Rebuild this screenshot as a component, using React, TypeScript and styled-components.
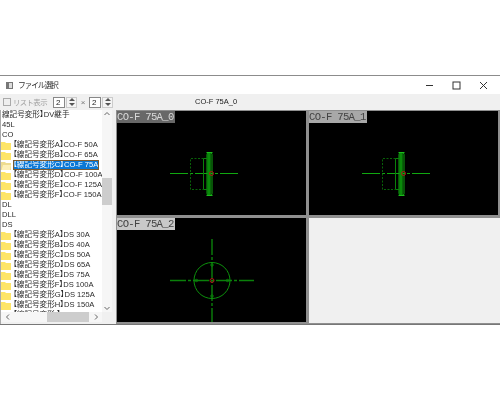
import React from 'react';
import styled, { createGlobalStyle } from 'styled-components';

const GlobalStyle = createGlobalStyle`
  html, body {
    margin: 0;
    padding: 0;
    width: 500px;
    height: 400px;
    overflow: hidden;
    background: #fff;
    font-family: "Liberation Sans", "Noto Sans CJK JP", sans-serif;
  }
`;

const Page = styled.div`
  width: 500px;
  height: 400px;
  padding-top: 75px;
  box-sizing: border-box;
  filter: blur(0.3px);
`;

const Window = styled.div`
  width: 500px;
  height: 250px;
  box-sizing: border-box;
  border-top: 1px solid #8c8c8c;
  border-bottom: 1px solid #777;
  display: flex;
  flex-direction: column;
  background: #f0f0f0;
`;

const TitleBar = styled.div`
  height: 18px;
  flex: none;
  background: #fff;
  display: flex;
  align-items: center;
  padding: 0 3px 0 6px;
`;

const AppIcon = styled.div`
  width: 7px;
  height: 7px;
  box-sizing: border-box;
  border: 1px solid #777;
  border-left-width: 3px;
  background: #ddd;
`;

const TitleText = styled.span`
  margin: 0 0 1px 5px;
  font-size: 7.8px;
  letter-spacing: -1.2px;
  color: #333;
  flex: 1;
`;

const WindowButton = styled.div`
  width: 27px;
  height: 18px;
  display: flex;
  align-items: center;
  justify-content: center;
`;

const Toolbar = styled.div`
  height: 16px;
  flex: none;
  display: flex;
  align-items: center;
  padding-left: 3px;
  box-sizing: border-box;
`;

const CheckBox = styled.div`
  width: 6px;
  height: 6px;
  border: 1px solid #aaa;
  background: #eee;
`;

const CheckLabel = styled.span`
  margin: 0 0 2px 2px;
  width: 40px;
  font-size: 7.4px;
  letter-spacing: -0.6px;
  color: #a0a0a0;
  white-space: nowrap;
`;

const SpinInput = styled.div`
  width: 12px;
  height: 11px;
  box-sizing: border-box;
  border: 1px solid #888;
  background: #fff;
  font-size: 8px;
  line-height: 9px;
  color: #222;
  padding-left: 2px;
`;

const SpinButtons = styled.div`
  width: 11px;
  height: 11px;
  margin-left: 1px;
  display: flex;
  flex-direction: column;
  align-items: center;
  justify-content: space-around;
  border: 1px solid #ccc;
  box-sizing: border-box;
  background: #f4f4f4;
`;

const Times = styled.span`
  width: 12px;
  text-align: center;
  font-size: 8px;
  color: #777;
`;

const PreviewName = styled.span`
  margin: 0 0 1px 82px;
  font-size: 7.5px;
  color: #222;
`;

const Body = styled.div`
  flex: 1;
  min-height: 0;
  display: flex;
`;

const ListBox = styled.div`
  width: 116px;
  flex: none;
  box-sizing: border-box;
  padding: 0 4px 2px 0;
  border-left: 1px solid #aaa;
  display: grid;
  grid-template-columns: 1fr 10px;
  grid-template-rows: 1fr 10px;
  background: #f0f0f0;
`;

const Rows = styled.div`
  overflow: hidden;
  background: #fff;
  white-space: nowrap;
`;

const Row = styled.div`
  height: 10px;
  display: flex;
  align-items: center;
  font-size: 7.6px;
  line-height: 10px;
  font-feature-settings: "palt";
`;

const RowName = styled.span<{ $selected?: boolean; $plain?: boolean }>`
  margin-left: ${(p) => (p.$plain ? '1px' : '2px')};
  padding-right: 1px;
  background: ${(p) => (p.$selected ? '#0a78d7' : 'transparent')};
  color: ${(p) => (p.$selected ? '#fff' : '#2a2a2a')};
  outline: ${(p) => (p.$selected ? '1px solid #7a5a30' : 'none')};
  outline-offset: -1px;
`;

const VTrack = styled.div`
  background: #f6f6f6;
  display: flex;
  flex-direction: column;
  align-items: center;
`;

const VThumb = styled.div`
  width: 10px;
  height: 27px;
  margin-top: 60px;
  margin-bottom: auto;
  background: #cdcdcd;
`;

const HTrack = styled.div`
  background: #f6f6f6;
  display: flex;
  align-items: center;
  padding: 0 2px 0 3px;
  box-sizing: border-box;
`;

const HThumb = styled.div`
  width: 42px;
  height: 10px;
  margin-left: 35px;
  margin-right: auto;
  background: #cdcdcd;
`;

const Corner = styled.div`
  background: #f0f0f0;
`;

const Views = styled.div`
  flex: 1;
  min-width: 0;
  display: grid;
  grid-template-columns: 192px 192px;
  grid-template-rows: 107px 107px;
  align-content: start;
`;

const View = styled.div<{ $empty?: boolean }>`
  box-sizing: border-box;
  border: 1px solid #8f8f8f;
  border-width: ${(p) => (p.$empty ? '1px 0 1px 1px' : '1px 2px 2px 1px')};
  background: ${(p) => (p.$empty ? '#f0f0f0' : '#000')};
  position: relative;
  overflow: hidden;
`;

const ViewLabel = styled.div<{ $active?: boolean; $dim?: boolean }>`
  position: absolute;
  left: 0;
  top: 0;
  height: 12px;
  padding: 0 1px 0 0;
  font: 10.6px/12px "Liberation Mono", monospace;
  letter-spacing: -0.7px;
  white-space: pre;
  background: ${(p) => (p.$active ? '#686868' : p.$dim ? '#a8a8a8' : '#c8c8c8')};
  color: ${(p) => (p.$active ? '#d8d8d8' : '#444')};
`;

const Drawing = styled.svg`
  display: block;
  width: 100%;
  height: 100%;
`;

const Chevron = ({ dir }: { dir: 'up' | 'down' | 'left' | 'right' }) => {
  const paths = {
    up: 'M1.5 5 4 2.5 6.5 5',
    down: 'M1.5 3 4 5.5 6.5 3',
    left: 'M5 1.5 2.5 4 5 6.5',
    right: 'M3 1.5 5.5 4 3 6.5',
  };
  return (
    <svg width="8" height="8" viewBox="0 0 8 8" style={{ flex: 'none' }}>
      <path d={paths[dir]} fill="none" stroke="#666" strokeWidth="1" />
    </svg>
  );
};

const SpinGlyph = () => (
  <SpinButtons>
    <svg width="6" height="3" viewBox="0 0 6 3"><path d="M3 0 6 3H0Z" fill="#555" /></svg>
    <svg width="6" height="3" viewBox="0 0 6 3"><path d="M0 0H6L3 3Z" fill="#555" /></svg>
  </SpinButtons>
);

const Folder = ({ open }: { open?: boolean }) => (
  <svg width="10" height="9" viewBox="0 0 10 9" style={{ flex: 'none' }}>
    <path d="M0 1H4L5 2H10V9H0Z" fill={open ? '#eedc90' : '#fde568'} />
    {open && <path d="M2 4H10L9 9H0.5Z" fill="#fdf0b8" />}
  </svg>
);

const SideDrawing = () => (
  <Drawing viewBox="0 0 189 104">
    <g fill="none" stroke="#10a810">
      <path d="M53 62.5H121" strokeDasharray="18 2 3 2" strokeWidth="1.2" />
      <rect x="90" y="41.5" width="5" height="43" rx="2" strokeWidth="1" />
      <path d="M92 42V84" stroke="#0a8a0a" strokeWidth="3.5" />
      <path d="M89.5 41.5H95.5M89.5 84.5H95.5" stroke="#1cbc1c" />
      <path d="M86.5 47.5V78.5M86.5 47.5H90M86.5 78.5H90" stroke="#0a800a" strokeWidth="1" />
      <path d="M86.5 47.5H73.5V78.5H86.5" stroke="#086208" strokeDasharray="2 1.5" />
    </g>
    <circle cx="94.5" cy="62.5" r="2" fill="none" stroke="#b01818" />
  </Drawing>
);

const FrontDrawing = () => (
  <Drawing viewBox="0 0 189 104">
    <g fill="none" stroke="#0a800a">
      <path d="M53 62.5H137" strokeDasharray="16 2 3 2" strokeWidth="1.4" />
      <path d="M95 21V104" strokeDasharray="16 2 3 2" strokeWidth="1.4" />
      <circle cx="95" cy="62.5" r="18" strokeWidth="1" stroke="#0c900c" />
      <circle cx="95" cy="47" r="1.2" />
      <circle cx="95" cy="78" r="1.2" />
      <circle cx="79.5" cy="62.5" r="1.2" />
      <circle cx="110.5" cy="62.5" r="1.2" />
    </g>
    <circle cx="95" cy="62.5" r="2" fill="none" stroke="#b01818" />
  </Drawing>
);

type Item = { name: string; folder?: boolean; selected?: boolean };

const items: Item[] = [
  { name: '線記号変形】DV継手' },
  { name: '45L' },
  { name: 'CO' },
  ...['A】CO-F 50A', 'B】CO-F 65A', 'C】CO-F 75A', 'D】CO-F 100A', 'E】CO-F 125A', 'F】CO-F 150A'].map((n) => ({
    name: `【線記号変形${n}`,
    folder: true,
    selected: n.startsWith('C'),
  })),
  { name: 'DL' },
  { name: 'DLL' },
  { name: 'DS' },
  ...['A】DS 30A', 'B】DS 40A', 'C】DS 50A', 'D】DS 65A', 'E】DS 75A', 'F】DS 100A', 'G】DS 125A', 'H】DS 150A', 'I】DS 200A'].map((n) => ({
    name: `【線記号変形${n}`,
    folder: true,
  })),
];

export default function App() {
  return (
    <Page>
      <GlobalStyle />
      <Window>
        <TitleBar>
          <AppIcon />
          <TitleText>ファイル選択</TitleText>
          <WindowButton>
            <svg width="9" height="9" viewBox="0 0 9 9"><path d="M1 4.5H8" stroke="#333" /></svg>
          </WindowButton>
          <WindowButton>
            <svg width="9" height="9" viewBox="0 0 9 9"><rect x="1" y="1" width="7" height="7" fill="none" stroke="#333" /></svg>
          </WindowButton>
          <WindowButton>
            <svg width="9" height="9" viewBox="0 0 9 9"><path d="M1 1 8 8M8 1 1 8" stroke="#333" /></svg>
          </WindowButton>
        </TitleBar>
        <Toolbar>
          <CheckBox />
          <CheckLabel>リスト表示</CheckLabel>
          <SpinInput>2</SpinInput>
          <SpinGlyph />
          <Times>×</Times>
          <SpinInput>2</SpinInput>
          <SpinGlyph />
          <PreviewName>CO-F 75A_0</PreviewName>
        </Toolbar>
        <Body>
          <ListBox>
            <Rows>
              {items.map((item) => (
                <Row key={item.name}>
                  {item.folder && <Folder open={item.selected} />}
                  <RowName $selected={item.selected} $plain={!item.folder}>{item.name}</RowName>
                </Row>
              ))}
            </Rows>
            <VTrack>
              <Chevron dir="up" />
              <VThumb />
              <Chevron dir="down" />
            </VTrack>
            <HTrack>
              <Chevron dir="left" />
              <HThumb />
              <Chevron dir="right" />
            </HTrack>
            <Corner />
          </ListBox>
          <Views>
            <View>
              <ViewLabel $active>CO-F 75A_0</ViewLabel>
              <SideDrawing />
            </View>
            <View>
              <ViewLabel $dim>CO-F 75A_1</ViewLabel>
              <SideDrawing />
            </View>
            <View>
              <ViewLabel>CO-F 75A_2</ViewLabel>
              <FrontDrawing />
            </View>
            <View $empty />
          </Views>
        </Body>
      </Window>
    </Page>
  );
}
